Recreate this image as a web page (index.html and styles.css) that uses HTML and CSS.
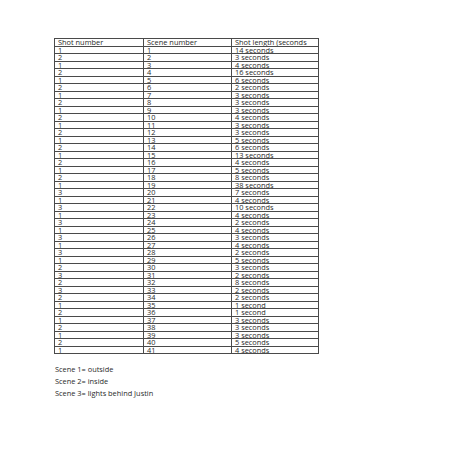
FILE: index.html
```html
<!DOCTYPE html>
<html>
<head>
<meta charset="utf-8">
<link rel="stylesheet" href="styles.css">
</head>
<body>
<div class="page">
<table class="shots">
<colgroup><col class="c1"><col class="c2"><col class="c3"></colgroup>
<tr><td>Shot number</td><td>Scene number</td><td>Shot length (seconds</td></tr>
<tr><td>1</td><td>1</td><td>14 seconds</td></tr>
<tr><td>2</td><td>2</td><td>3 seconds</td></tr>
<tr><td>1</td><td>3</td><td>4 seconds</td></tr>
<tr><td>2</td><td>4</td><td>16 seconds</td></tr>
<tr><td>1</td><td>5</td><td>6 seconds</td></tr>
<tr><td>2</td><td>6</td><td>2 seconds</td></tr>
<tr><td>1</td><td>7</td><td>3 seconds</td></tr>
<tr><td>2</td><td>8</td><td>3 seconds</td></tr>
<tr><td>1</td><td>9</td><td>3 seconds</td></tr>
<tr><td>2</td><td>10</td><td>4 seconds</td></tr>
<tr><td>1</td><td>11</td><td>3 seconds</td></tr>
<tr><td>2</td><td>12</td><td>3 seconds</td></tr>
<tr><td>1</td><td>13</td><td>5 seconds</td></tr>
<tr><td>2</td><td>14</td><td>6 seconds</td></tr>
<tr><td>1</td><td>15</td><td>13 seconds</td></tr>
<tr><td>2</td><td>16</td><td>4 seconds</td></tr>
<tr><td>1</td><td>17</td><td>5 seconds</td></tr>
<tr><td>2</td><td>18</td><td>8 seconds</td></tr>
<tr><td>1</td><td>19</td><td>38 seconds</td></tr>
<tr><td>3</td><td>20</td><td>7 seconds</td></tr>
<tr><td>1</td><td>21</td><td>4 seconds</td></tr>
<tr><td>3</td><td>22</td><td>10 seconds</td></tr>
<tr><td>1</td><td>23</td><td>4 seconds</td></tr>
<tr><td>3</td><td>24</td><td>2 seconds</td></tr>
<tr><td>1</td><td>25</td><td>4 seconds</td></tr>
<tr><td>3</td><td>26</td><td>3 seconds</td></tr>
<tr><td>1</td><td>27</td><td>4 seconds</td></tr>
<tr><td>3</td><td>28</td><td>2 seconds</td></tr>
<tr><td>1</td><td>29</td><td>5 seconds</td></tr>
<tr><td>2</td><td>30</td><td>3 seconds</td></tr>
<tr><td>3</td><td>31</td><td>2 seconds</td></tr>
<tr><td>2</td><td>32</td><td>8 seconds</td></tr>
<tr><td>3</td><td>33</td><td>2 seconds</td></tr>
<tr><td>2</td><td>34</td><td>2 seconds</td></tr>
<tr><td>1</td><td>35</td><td>1 second</td></tr>
<tr><td>2</td><td>36</td><td>1 second</td></tr>
<tr><td>1</td><td>37</td><td>3 seconds</td></tr>
<tr><td>2</td><td>38</td><td>3 seconds</td></tr>
<tr><td>1</td><td>39</td><td>3 seconds</td></tr>
<tr><td>2</td><td>40</td><td>5 seconds</td></tr>
<tr><td>1</td><td>41</td><td>4 seconds</td></tr>
</table>
<div class="legend">
<p>Scene 1= outside</p>
<p>Scene 2= inside</p>
<p>Scene 3= lights behind Justin</p>
</div>
</div>
</body>
</html>
```
FILE: styles.css
```css
html, body {
  margin: 0;
  padding: 0;
  background: #fff;
}
.page {
  padding: 38px 0 0 54px;
  font-family: "Open Sans", "Liberation Sans", sans-serif;
  color: #2a2a2a;
}
.shots {
  border-collapse: collapse;
  table-layout: fixed;
  width: 264px;
}
.c1 { width: 89px; }
.c2 { width: 88px; }
.c3 { width: 87px; }
.shots td {
  height: 6.5px;
  padding: 0 0 0 3px;
  border: 1px solid #4a4a4a;
  font-size: 7.4px;
  line-height: 6.5px;
  white-space: nowrap;
  overflow: hidden;
  vertical-align: middle;
}
.legend {
  margin-top: 12px;
  font-size: 7.4px;
  line-height: 7px;
}
.legend p {
  margin: 0 0 5px 1px;
}
```
